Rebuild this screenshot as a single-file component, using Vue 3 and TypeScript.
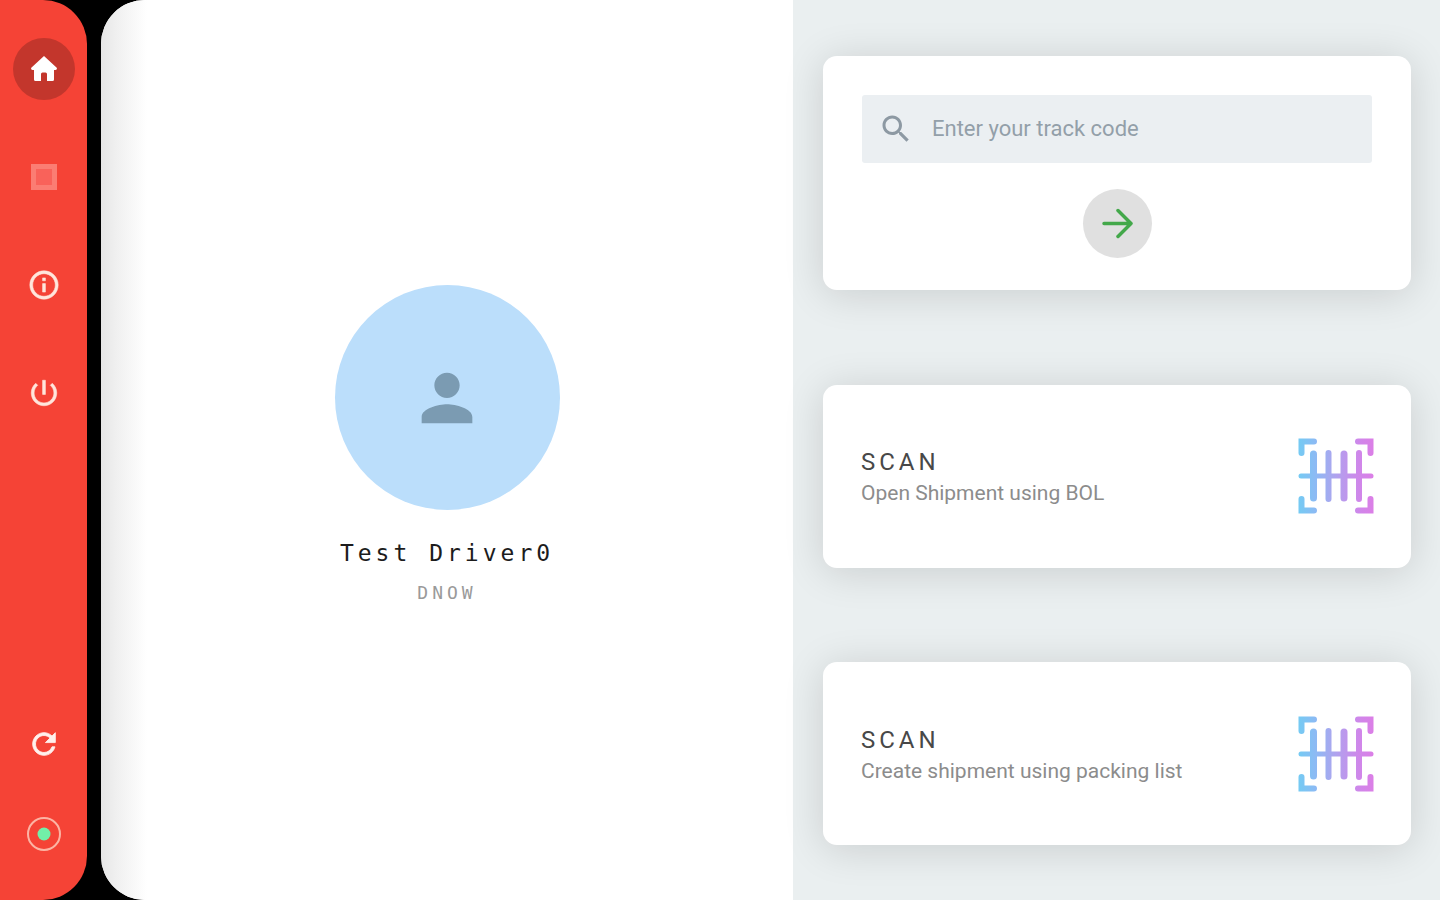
<script setup lang="ts">
import { ref } from 'vue'

interface ScanAction {
  id: string
  title: string
  description: string
}

const trackCode = ref('')
const scanActions: ScanAction[] = [
  { id: 'bol', title: 'SCAN', description: 'Open Shipment using BOL' },
  { id: 'packing', title: 'SCAN', description: 'Create shipment using packing list' },
]
</script>

<template>
  <div class="app">
    <nav class="sidebar" aria-label="Main">
      <div class="group top">
        <button class="nav-button active" type="button" aria-label="Home">
          <svg width="26" height="26" viewBox="0 0 26 26">
            <path d="M13 0 26 12Q26 14 24.500 14H23V23.500Q23 25 21.500 25H16V18Q16 16.500 14.500 16.500H11.500Q10 16.500 10 18V25H4.500Q3 25 3 23.500V14H1.500Q0 14 0 12Z" fill="#fff" />
          </svg>
        </button>
        <button class="nav-button" type="button" aria-label="Stop">
          <svg width="26" height="26" viewBox="0 0 26 26">
            <rect width="26" height="26" fill="#fb7d73" />
            <rect x="5" y="5" width="16" height="16" fill="#f9625a" />
          </svg>
        </button>
        <button class="nav-button" type="button" aria-label="Information">
          <svg width="34" height="34" viewBox="0 0 24 24" fill="#ffe6dc" stroke="#ffe6dc" stroke-width="0.4">
            <path d="M11 7h2v2h-2zm0 4h2v6h-2zm1-9C6.480 2 2 6.480 2 12s4.480 10 10 10 10-4.480 10-10S17.520 2 12 2zm0 18c-4.410 0-8-3.590-8-8s3.590-8 8-8 8 3.590 8 8-3.590 8-8 8z" />
          </svg>
        </button>
        <button class="nav-button" type="button" aria-label="Power">
          <svg width="34" height="34" viewBox="0 0 24 24" fill="#ffe6dc" stroke="#ffe6dc" stroke-width="0.4">
            <path d="M13 3h-2v10h2V3zm4.830 2.170-1.420 1.420C17.990 7.860 19 9.810 19 12c0 3.870-3.130 7-7 7s-7-3.130-7-7c0-2.190 1.010-4.140 2.580-5.420L6.170 5.170C4.230 6.820 3 9.260 3 12c0 4.970 4.030 9 9 9s9-4.030 9-9c0-2.740-1.230-5.180-3.170-6.830z" />
          </svg>
        </button>
      </div>
      <div class="group bottom">
        <button class="nav-button" type="button" aria-label="Refresh">
          <svg width="34" height="34" viewBox="0 0 24 24" fill="#fff0ec" stroke="#fff0ec" stroke-width="0.6">
            <path d="M17.650 6.350C16.200 4.900 14.210 4 12 4c-4.420 0-7.990 3.580-7.990 8s3.570 8 7.990 8c3.730 0 6.840-2.550 7.730-6h-2.080c-.82 2.330-3.040 4-5.650 4-3.310 0-6-2.690-6-6s2.690-6 6-6c1.660 0 3.140.69 4.220 1.780L13 11h7V4l-2.350 2.350z" />
          </svg>
        </button>
        <button class="nav-button" type="button" aria-label="Status">
          <svg width="36" height="36" viewBox="0 0 36 36">
            <circle cx="18" cy="18" r="16" fill="none" stroke="#fcb4a4" stroke-width="2" />
            <circle cx="18" cy="18" r="6.500" fill="#72efa8" />
          </svg>
        </button>
      </div>
    </nav>

    <main class="content">
      <section class="profile">
        <div class="avatar">
          <svg width="76" height="76" viewBox="0 0 24 24" fill="#7b9bb2">
            <path d="M12 12c2.210 0 4-1.790 4-4s-1.790-4-4-4-4 1.790-4 4 1.790 4 4 4zm0 2c-2.670 0-8 1.340-8 4v2h16v-2c0-2.660-5.330-4-8-4z" />
          </svg>
        </div>
        <h1 class="name">Test Driver0</h1>
        <p class="company">DNOW</p>
      </section>

      <section class="actions">
        <form class="card track" @submit.prevent>
          <label class="search">
            <svg width="36" height="36" viewBox="0 0 24 24" fill="#8d99a3">
              <path d="M15.500 14h-.79l-.28-.27C15.410 12.590 16 11.110 16 9.500 16 5.910 13.090 3 9.500 3S3 5.910 3 9.500 5.910 16 9.500 16c1.610 0 3.090-.59 4.230-1.570l.27.28v.79l5 4.990L20.490 19l-4.990-5zm-6 0C7.010 14 5 11.990 5 9.500S7.010 5 9.500 5 14 7.010 14 9.500 11.990 14 9.500 14z" />
            </svg>
            <input v-model="trackCode" type="text" placeholder="Enter your track code" aria-label="Track code" />
          </label>
          <button class="go" type="submit" aria-label="Track">
            <svg width="31" height="31" viewBox="0 0 31 31" fill="none" stroke="#43a84a" stroke-width="3.500" stroke-linecap="round" stroke-linejoin="round">
              <path d="M2 15.500H29M16 2.500 29 15.500 16 28.500" />
            </svg>
          </button>
        </form>

        <button v-for="action in scanActions" :key="action.id" class="card scan" type="button">
          <span class="scan-text">
            <span class="scan-title">{{ action.title }}</span>
            <span class="scan-description">{{ action.description }}</span>
          </span>
          <svg width="76" height="76" viewBox="0 0 76 76" fill="none" stroke-linecap="round">
            <defs>
              <linearGradient :id="'scan-' + action.id" gradientUnits="userSpaceOnUse" x1="0" y1="0" x2="76" y2="0">
                <stop offset="0" stop-color="#74cbf3" />
                <stop offset="0.22" stop-color="#8bbbf4" />
                <stop offset="0.5" stop-color="#b0a2ee" />
                <stop offset="0.8" stop-color="#cf87ea" />
                <stop offset="1" stop-color="#dc7ee6" />
              </linearGradient>
            </defs>
            <g :stroke="'url(#scan-' + action.id + ')'">
              <path stroke-width="6" d="M3.500 15V3.500H16M60 3.500H72.500V15M72.500 61V72.500H60M16 72.500H3.500V61" />
              <path stroke-width="5" d="M3 38H73" />
              <path stroke-width="7" d="M15.500 16V60M46 16V60" />
              <path stroke-width="6" d="M30.500 15V61M61 15V61" />
            </g>
          </svg>
        </button>
      </section>
    </main>
  </div>
</template>

<style>
body {
  margin: 0;
  background: #000;
}
</style>

<style scoped>
.app {
  display: flex;
  gap: 14px;
  min-height: 100vh;
  background: #000;
  font-family: Roboto, "Liberation Sans", sans-serif;
}

button {
  border: 0;
  padding: 0;
  font: inherit;
  cursor: pointer;
}

svg {
  display: block;
  flex: none;
}

.sidebar {
  box-sizing: border-box;
  flex: none;
  width: 87px;
  padding: 38px 12px 35px 13px;
  display: flex;
  flex-direction: column;
  justify-content: space-between;
  background: #f54336;
  border-radius: 0 44px 44px 0;
}

.group {
  display: flex;
  flex-direction: column;
}

.top {
  gap: 46px;
}

.bottom {
  gap: 28px;
}

.nav-button {
  display: flex;
  align-items: center;
  justify-content: center;
  width: 62px;
  height: 62px;
  border-radius: 50%;
  background: transparent;
}

.nav-button.active {
  background: #c3362c;
}

.content {
  flex: 1;
  min-width: 0;
  display: grid;
  grid-template-columns: minmax(0, 692fr) minmax(0, 647fr);
  overflow: hidden;
  border-radius: 44px 0 0 44px;
  background: #fff;
}

.profile {
  display: flex;
  flex-direction: column;
  align-items: center;
  justify-content: center;
  background: linear-gradient(90deg, #e6e6e6 0, #f0f0f0 16px, #fff 46px);
}

.avatar {
  display: flex;
  align-items: center;
  justify-content: center;
  width: 225px;
  height: 225px;
  border-radius: 50%;
  background: #bbdefb;
}

.name,
.company {
  font-family: "DejaVu Sans Mono", monospace;
  font-weight: 400;
}

.name {
  margin: 27px 0 12px;
  font-size: 23px;
  line-height: 32px;
  letter-spacing: 4px;
  color: #1c1c1c;
}

.company {
  margin: 0 0 10px;
  font-size: 18px;
  line-height: 24px;
  letter-spacing: 4px;
  color: #9a9a9a;
}

.actions {
  box-sizing: border-box;
  padding: 56px 29px 55px 30px;
  display: flex;
  flex-direction: column;
  justify-content: space-between;
  gap: 24px;
  background: #eaeff0;
}

.card {
  box-sizing: border-box;
  width: 100%;
  background: #fff;
  border-radius: 14px;
  box-shadow: 0 4px 40px rgba(0, 0, 0, 0.14);
}

.track {
  padding: 39px 39px 32px;
  display: flex;
  flex-direction: column;
  align-items: center;
  gap: 26px;
}

.search {
  box-sizing: border-box;
  width: 100%;
  height: 68px;
  padding: 0 16px;
  display: flex;
  align-items: center;
  gap: 18px;
  background: #ebeff2;
  border-radius: 3px;
}

.search input {
  flex: 1;
  min-width: 0;
  padding: 0;
  border: 0;
  outline: 0;
  background: transparent;
  font: inherit;
  font-size: 22px;
  line-height: 28px;
  color: #444;
}

.search input::placeholder {
  color: #939fa9;
  opacity: 1;
}

.go {
  display: flex;
  align-items: center;
  justify-content: center;
  width: 69px;
  height: 69px;
  border-radius: 50%;
  background: #e0e0e0;
}

.scan {
  min-height: 183px;
  padding: 0 37px 0 38px;
  display: flex;
  align-items: center;
  justify-content: space-between;
  text-align: left;
}

.scan-text {
  display: flex;
  flex-direction: column;
  padding-top: 2px;
}

.scan-title {
  font-size: 24px;
  line-height: 32px;
  letter-spacing: 4px;
  color: #484848;
}

.scan-description {
  font-size: 21px;
  line-height: 30px;
  color: #8c8c8c;
}
</style>
